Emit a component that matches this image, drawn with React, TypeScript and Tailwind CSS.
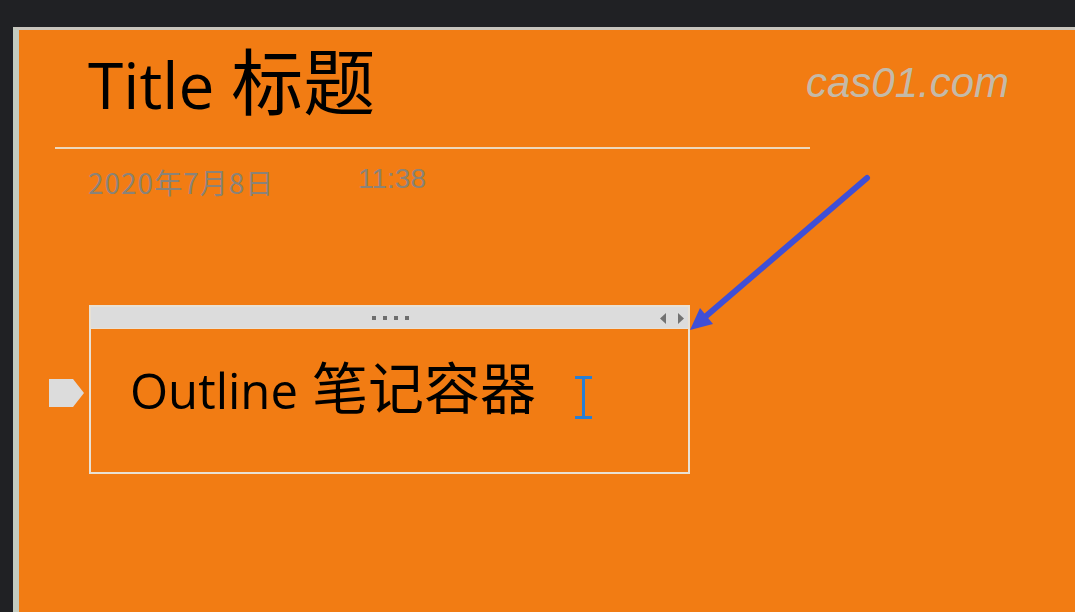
export default function App() {
  const cjk = { fontFamily: '"Noto Sans CJK SC", "Noto Sans", sans-serif' };
  const lat = { fontFamily: '"Open Sans", "Noto Sans CJK SC", sans-serif' };
  return (
    <div className="relative w-[1075px] h-[612px] bg-[#202124] overflow-hidden pt-[27px] pl-[13px] flex">
      <div className="relative flex-1 h-[585px] bg-[#f27c13] border-l-[6px] border-t-[3px] border-l-[#c3cbbf] border-t-[#c9c5bd]">
        <div className="ml-[36px] w-[755px]">
          <div className="pl-[33px] h-[117px] pt-[8px] flex items-baseline whitespace-nowrap text-black">
            <span className="text-[64px] leading-[80px]" style={lat}>Title</span>
            <span className="ml-[17px] text-[72px] leading-[80px]" style={cjk}>标题</span>
          </div>
          <div className="h-[2px] bg-[#ecd8bd]" />
          <div className="pl-[33px] h-[56px] flex items-start whitespace-nowrap text-[#8a8378]">
            <div className="w-[270px]">
              <span className="block mt-[17px] text-[28px] leading-[32px] tracking-[1px]" style={cjk}>2020年7月8日</span>
            </div>
            <span className="mt-[14px] text-[28px] leading-[32px]" style={{ fontFamily: '"Liberation Sans", Arial, sans-serif' }}>11:38</span>
          </div>
        </div>

        <div className="relative ml-[70px] mt-[100px] w-[601px] h-[169px] flex flex-col border-2 border-[#e9e1d4]">
          <div className="relative h-[22px] bg-[#dcdcdc] border-b border-[#e9e1d4] flex items-center justify-center">
            <div className="flex gap-[7px] ml-[2px]">
              <div className="w-[4px] h-[4px] bg-[#6e6e6e]" />
              <div className="w-[4px] h-[4px] bg-[#6e6e6e]" />
              <div className="w-[4px] h-[4px] bg-[#6e6e6e]" />
              <div className="w-[4px] h-[4px] bg-[#6e6e6e]" />
            </div>
            <svg className="absolute right-[2px] top-[5px]" width="28" height="13" viewBox="0 0 28 13">
              <polygon points="2,6.5 8,1 8,12" fill="#727272" />
              <polygon points="26,6.5 20,1 20,12" fill="#727272" />
            </svg>
          </div>
          <div className="flex-1 pl-[39px] pt-[24px] flex items-start whitespace-nowrap text-black">
            <div className="flex items-baseline">
              <span className="text-[49px] leading-[64px]" style={lat}>Outline</span>
              <span className="ml-[14px] text-[56px] leading-[64px]" style={cjk}>笔记容器</span>
            </div>
            <svg className="ml-[38px] mt-[23px]" width="19" height="43" viewBox="0 0 19 43">
              <path d="M1 1.5 H18 M9.5 1.5 V41.5 M1 41.5 H18" stroke="#2a7fd4" strokeWidth="3" fill="none" />
            </svg>
          </div>
          <svg className="absolute left-[-42px] top-[72px]" width="35" height="28" viewBox="0 0 35 28">
            <polygon points="0,0 24,0 35,14 24,28 0,28" fill="#dcdcdc" />
          </svg>
        </div>
      </div>

      <svg className="absolute inset-0 pointer-events-none" width="1075" height="612" viewBox="0 0 1075 612">
        <line x1="867" y1="178" x2="705" y2="317" stroke="#3f4fd6" strokeWidth="6" strokeLinecap="round" />
        <polygon points="690,330 700,308 713,324" fill="#3f4fd6" />
      </svg>

      <div className="absolute left-[806px] top-[58px] text-[42px] leading-[50px] italic text-[#c4baa9] whitespace-nowrap" style={{ fontFamily: '"Liberation Sans", Arial, sans-serif' }}>
        cas01.com
      </div>
    </div>
  );
}
